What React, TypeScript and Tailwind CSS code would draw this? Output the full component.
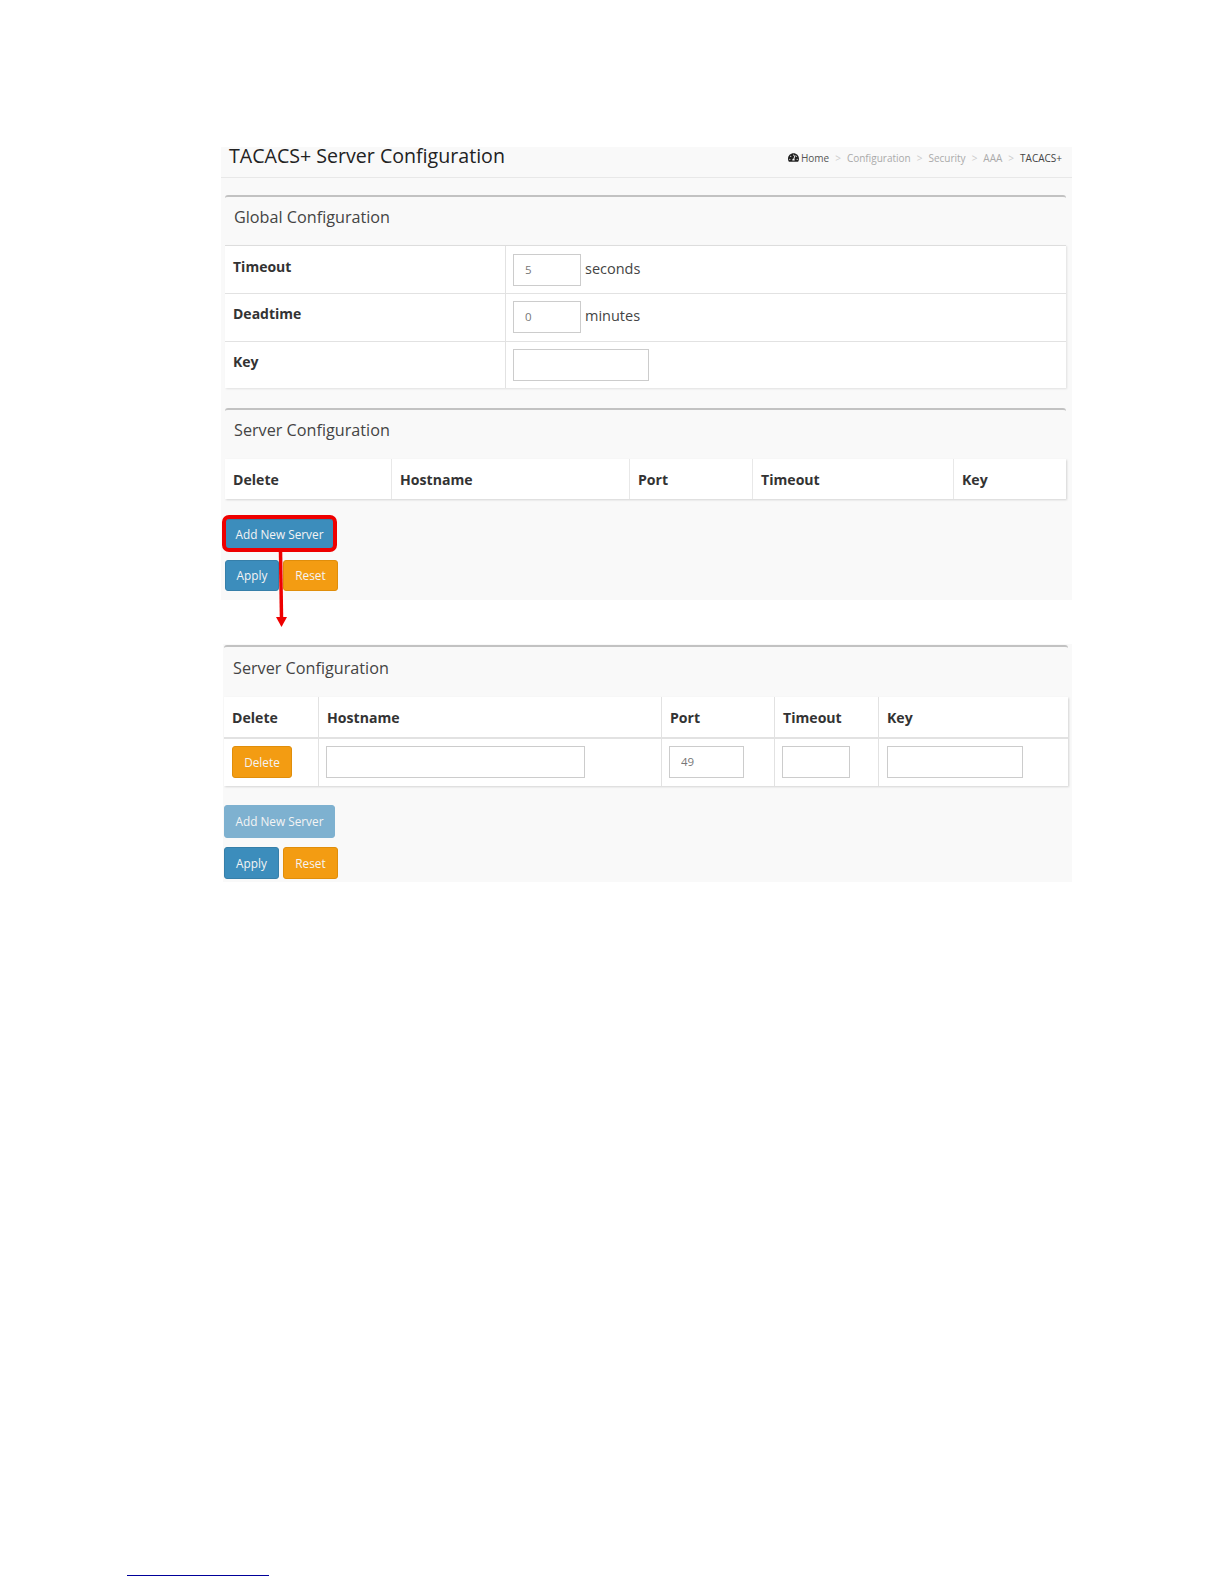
import { FaTachometerAlt } from "react-icons/fa";

const font = "font-['Open_Sans',sans-serif]";

function TextInput({ value, className }: { value?: string; className: string }) {
  return (
    <input
      readOnly
      value={value ?? ""}
      className={`h-[32px] border border-[#cccccc] bg-white px-[11px] pb-[2px] text-[11.5px] text-[#777777] outline-none ${className}`}
    />
  );
}

function Btn({ label, color, className }: { label: string; color: "blue" | "orange" | "faded"; className: string }) {
  const bg =
    color === "blue"
      ? "bg-[#3c8dbc] border-[#367fa9]"
      : color === "orange"
        ? "bg-[#f39c12] border-[#e08e0b]"
        : "bg-[#7eb1d0] border-[#7eb1d0]";
  return (
    <button type="button" className={`flex items-center justify-center rounded-[3px] border pt-px text-[11.8px] text-[#f4f4f4] ${bg} ${className}`}>
      {label}
    </button>
  );
}

function Crumb({ label, last }: { label: string; last?: boolean }) {
  return (
    <>
      <span className={last ? "text-[#444444]" : "text-[#aaaaaa]"}>{label}</span>
      {!last && <span className="mx-[6px] text-[#cccccc]">&gt;</span>}
    </>
  );
}

function PanelTitle({ title, height }: { title: string; height: string }) {
  return (
    <div className={`flex items-center rounded-t-[3px] border-t-2 border-[#c2c2c2] pb-[8px] pl-[9px] text-[16.2px] text-[#444444] ${height}`}>
      {title}
    </div>
  );
}

function GlobalRow({ label, children, first, last }: { label: string; children: React.ReactNode; first?: boolean; last?: boolean }) {
  return (
    <div className={`flex ${last ? "h-[46px]" : "h-[48px] border-b border-[#e2e2e2]"}`}>
      <div className={`w-[281px] shrink-0 border-r border-[#e2e2e2] pl-[8px] text-[14px] font-bold text-[#333333] ${first ? "pt-[10px]" : "pt-[9px]"}`}>
        {label}
      </div>
      <div className={`flex items-start gap-[4px] pl-[7px] text-[14.5px] leading-[30px] text-[#444444] ${first ? "pt-[8px]" : "pt-[7px]"}`}>
        {children}
      </div>
    </div>
  );
}

function HeadCell({ label, className }: { label: string; className: string }) {
  return <div className={`flex items-center pt-px pl-[8px] text-[14.1px] font-bold text-[#333333] ${className}`}>{label}</div>;
}

export default function App() {
  return (
    <div className={`relative h-[1584px] w-[1224px] overflow-hidden bg-white pt-[147px] pl-[221px] ${font}`}>
      {/* first screen */}
      <div className="h-[453px] w-[851px] bg-[#f9f9f9]">
        <div className="flex h-[31px] items-start justify-between border-b border-[#e8e8e8] pr-[10px] pl-[8px]">
          <h1 className="text-[19.6px] leading-[17px] text-[#222222]">TACACS+ Server Configuration</h1>
          <div className="mt-[5px] flex items-center text-[10px] leading-none">
            <FaTachometerAlt className="mr-[2px] h-[11px] w-[11px] text-[#222222]" />
            <span className="text-[#555555]">Home</span>
            <span className="mx-[6px] text-[#cccccc]">&gt;</span>
            <Crumb label="Configuration" />
            <Crumb label="Security" />
            <Crumb label="AAA" />
            <Crumb label="TACACS+" last />
          </div>
        </div>

        <div className="mt-[17px] ml-[4px] w-[841px]">
          <PanelTitle title="Global Configuration" height="h-[50px]" />
          <div className="border-t border-[#dddddd] bg-white shadow-[1px_1px_2px_rgba(0,0,0,0.1)]">
            <GlobalRow label="Timeout" first>
              <TextInput value="5" className="w-[68px]" />
              <span>seconds</span>
            </GlobalRow>
            <GlobalRow label="Deadtime">
              <TextInput value="0" className="w-[68px]" />
              <span>minutes</span>
            </GlobalRow>
            <GlobalRow label="Key" last>
              <TextInput className="w-[136px]" />
            </GlobalRow>
          </div>

          <div className="mt-[20px]">
            <PanelTitle title="Server Configuration" height="h-[51px]" />
            <div className="flex h-[40px] bg-white shadow-[1px_1px_2px_rgba(0,0,0,0.15)]">
              <HeadCell label="Delete" className="w-[167px] border-r border-[#e8e8e8]" />
              <HeadCell label="Hostname" className="w-[238px] border-r border-[#e8e8e8]" />
              <HeadCell label="Port" className="w-[123px] border-r border-[#e8e8e8]" />
              <HeadCell label="Timeout" className="w-[201px] border-r border-[#e8e8e8]" />
              <HeadCell label="Key" className="flex-1" />
            </div>
          </div>

          <Btn label="Add New Server" color="blue" className="mt-[20px] h-[31px] w-[109px]" />
          <div className="mt-[10px] flex gap-[4px]">
            <Btn label="Apply" color="blue" className="h-[31px] w-[54px]" />
            <Btn label="Reset" color="orange" className="h-[31px] w-[55px]" />
          </div>
        </div>
      </div>

      {/* second screen */}
      <div className="mt-[44px] ml-[2px] h-[238px] w-[849px] bg-[#f9f9f9] pt-px">
        <div className="ml-[1px] w-[844px]">
          <PanelTitle title="Server Configuration" height="h-[52px]" />
          <div className="bg-white shadow-[1px_1px_2px_rgba(0,0,0,0.15)]">
            <div className="flex h-[42px] border-b-2 border-[#e2e2e2]">
              <HeadCell label="Delete" className="w-[95px] border-r border-[#e2e2e2]" />
              <HeadCell label="Hostname" className="w-[343px] border-r border-[#e2e2e2]" />
              <HeadCell label="Port" className="w-[113px] border-r border-[#e2e2e2]" />
              <HeadCell label="Timeout" className="w-[104px] border-r border-[#e2e2e2]" />
              <HeadCell label="Key" className="flex-1" />
            </div>
            <div className="flex h-[47px]">
              <div className="w-[95px] border-r border-[#e2e2e2] pt-[7px] pl-[8px]">
                <Btn label="Delete" color="orange" className="h-[32px] w-[60px]" />
              </div>
              <div className="w-[343px] border-r border-[#e2e2e2] pt-[7px] pl-[7px]">
                <TextInput className="w-[259px]" />
              </div>
              <div className="w-[113px] border-r border-[#e2e2e2] pt-[7px] pl-[7px]">
                <TextInput value="49" className="w-[75px]" />
              </div>
              <div className="w-[104px] border-r border-[#e2e2e2] pt-[7px] pl-[7px]">
                <TextInput className="w-[68px]" />
              </div>
              <div className="flex-1 pt-[7px] pl-[8px]">
                <TextInput className="w-[136px]" />
              </div>
            </div>
          </div>
          <Btn label="Add New Server" color="faded" className="mt-[19px] h-[33px] w-[111px]" />
          <div className="mt-[9px] flex gap-[4px]">
            <Btn label="Apply" color="blue" className="h-[32px] w-[55px]" />
            <Btn label="Reset" color="orange" className="h-[32px] w-[55px]" />
          </div>
        </div>
      </div>

      {/* annotation over the first screen */}
      <div className="absolute top-[515px] left-[222px] h-[37px] w-[115px] rounded-[7px] border-[4px] border-[#ee0000]" />
      <svg className="absolute top-[551px] left-[275px]" width="14" height="77" viewBox="0 0 14 77">
        <path d="M5.5 0 L6.5 67" stroke="#ee0000" strokeWidth="3.5" fill="none" />
        <path d="M1 66 L12 66 L6.5 76 Z" fill="#ee0000" />
      </svg>

      {/* footnote rule at the foot of the page */}
      <div className="absolute top-[1575px] left-[127px] h-px w-[142px] bg-[#00009a]" />
    </div>
  );
}
